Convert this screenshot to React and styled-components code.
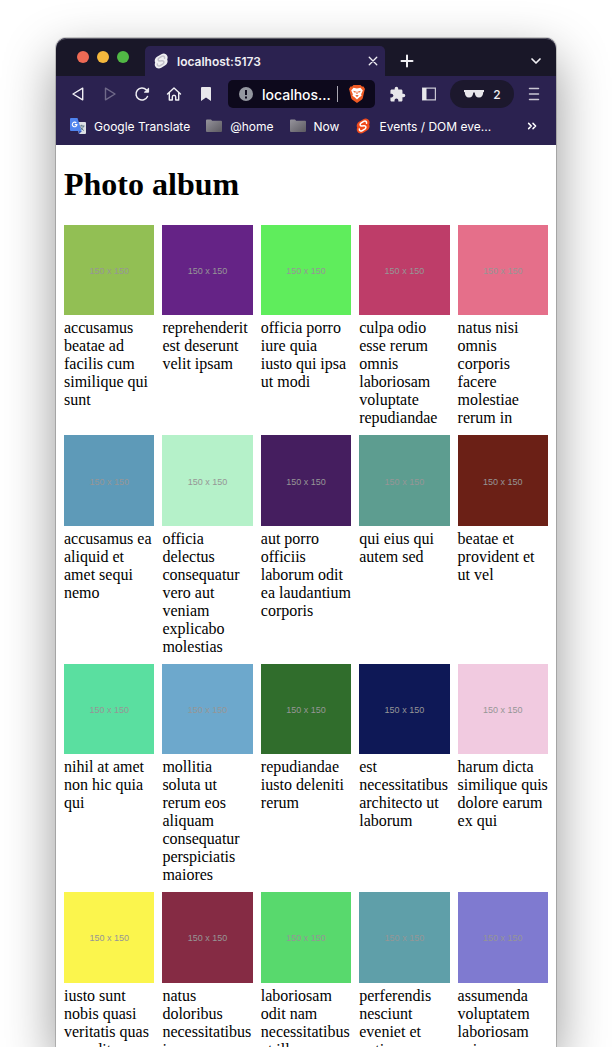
import React from "react";
import styled, { createGlobalStyle } from "styled-components";
import { MdExtension } from "react-icons/md";

const Global = createGlobalStyle`
  *, *::before, *::after { box-sizing: border-box; }
  body { margin: 0; background: #fff; }
  button, input { font: inherit; color: inherit; border: 0; padding: 0; margin: 0; background: none; }
  button { cursor: pointer; }
`;

const Desktop = styled.div`
  display: flex;
  height: 100vh;
  padding: 38px 56px 0;
  overflow: hidden;
`;

const Window = styled.div`
  flex: 1;
  min-width: 0;
  border-radius: 10px 10px 0 0;
  box-shadow: 0 0 0 1px rgba(0, 0, 0, 0.18), 0 20px 52px rgba(0, 0, 0, 0.42);
`;

const Chrome = styled.header`
  overflow: hidden;
  border-radius: 10px 10px 0 0;
  background: #2b2250;
  color: #f0eff4;
  font-family: Inter, "Liberation Sans", sans-serif;
  font-size: 12px;
  font-weight: 500;
`;

const TabStrip = styled.div`
  display: flex;
  align-items: flex-end;
  height: 38px;
  padding-left: 21px;
  border-radius: 10px 10px 0 0;
  background: #191728;
  box-shadow: inset 0 1px 0 #5d5c68;
`;

const Lights = styled.div`
  display: flex;
  align-self: center;
  gap: 8px;
  margin-right: 16px;
`;

const Light = styled.button`
  width: 12px;
  height: 12px;
  border-radius: 50%;
  background: ${(p) => p.$color};
`;

const Tab = styled.div`
  display: flex;
  align-items: center;
  flex: 0 1 240px;
  height: 30px;
  padding: 0 6px 0 8px;
  border-radius: 5px 5px 0 0;
  background: #2b2250;
`;

const TabTitle = styled.span`
  flex: 1;
  margin-left: 8px;
  font-weight: 600;
`;

const IconButton = styled.button`
  display: grid;
  place-items: center;
  flex: none;
  width: ${(p) => p.$w || 32}px;
  height: ${(p) => p.$h || 28}px;
  opacity: ${(p) => (p.disabled ? 0.35 : 1)};
`;

const Spacer = styled.div`
  flex: 1;
`;

const Toolbar = styled.div`
  display: flex;
  align-items: center;
  height: 36px;
  padding: 0 6px;
`;

const Address = styled.div`
  display: flex;
  align-items: center;
  flex: 1;
  min-width: 0;
  height: 28px;
  margin: 0 6px;
  padding: 0 10px;
  border-radius: 5px;
  background: #0d091c;
  font-size: 14px;
`;

const AddressInput = styled.input`
  flex: 1;
  min-width: 0;
  margin: 0 6px 0 8px;
  color: #fff;
`;

const Divider = styled.span`
  width: 1px;
  height: 16px;
  margin-right: 11px;
  background: #a9a7b2;
`;

const PrivateBadge = styled.button`
  display: flex;
  align-items: center;
  justify-content: center;
  gap: 8px;
  width: 64px;
  height: 28px;
  margin: 0 4px 0 5px;
  border-radius: 14px;
  background: #1c182d;

  svg {
    flex: none;
  }
`;

const Bookmarks = styled.nav`
  display: flex;
  align-items: center;
  height: 33px;
  padding: 0 14px 5px;
  gap: 16px;
  font-weight: 400;
  color: #fff;
`;

const Bookmark = styled.a`
  display: flex;
  align-items: center;
  gap: 8px;
  color: inherit;
  text-decoration: none;
  white-space: nowrap;
`;

const Page = styled.main`
  min-height: 100vh;
  padding: 21px 8px 8px;
  background: #fff;
  color: #000;
  font: 16px/18px "Liberation Serif", "Times New Roman", serif;
`;

const Title = styled.h1`
  margin: 0 0 23px;
  font-size: 32px;
  line-height: 36px;
`;

const Album = styled.div`
  display: grid;
  grid-template-columns: repeat(5, minmax(0, 1fr));
  gap: 8px;
`;

const Photo = styled.figure`
  margin: 0;
`;

const Thumb = styled.div`
  display: grid;
  place-items: center;
  aspect-ratio: 1;
  margin-bottom: 4px;
  padding-top: 2px;
  background: ${(p) => p.$color};
  color: #969696;
  font: 9px/12px "Liberation Sans", Arial, sans-serif;
`;

const photos = [
  ["#92bf54", "accusamus beatae ad facilis cum similique qui sunt"],
  ["#652386", "reprehenderit est deserunt velit ipsam"],
  ["#5fed5c", "officia porro iure quia iusto qui ipsa ut modi"],
  ["#be3d69", "culpa odio esse rerum omnis laboriosam voluptate repudiandae"],
  ["#e56f8a", "natus nisi omnis corporis facere molestiae rerum in"],
  ["#5e9ab8", "accusamus ea aliquid et amet sequi nemo"],
  ["#b5f1c9", "officia delectus consequatur vero aut veniam explicabo molestias"],
  ["#451e5f", "aut porro officiis laborum odit ea laudantium corporis"],
  ["#5d9d90", "qui eius qui autem sed"],
  ["#6b2016", "beatae et provident et ut vel"],
  ["#5adfa0", "nihil at amet non hic quia qui"],
  ["#6da8cc", "mollitia soluta ut rerum eos aliquam consequatur perspiciatis maiores"],
  ["#306d2c", "repudiandae iusto deleniti rerum"],
  ["#0e1856", "est necessitatibus architecto ut laborum"],
  ["#f1cae0", "harum dicta similique quis dolore earum ex qui"],
  ["#fbf54d", "iusto sunt nobis quasi veritatis quas expedita voluptatum deserunt"],
  ["#852b44", "natus doloribus necessitatibus ipsa"],
  ["#58d96d", "laboriosam odit nam necessitatibus et illum dolores reiciendis"],
  ["#5f9fa9", "perferendis nesciunt eveniet et optio a"],
  ["#7f7ad0", "assumenda voluptatem laboriosam enim consequatur veniam placeat reiciendis error"],
];

function Line({ size = 16, d, width = 1.5, ...rest }) {
  return (
    <svg width={size} height={size} viewBox="0 0 16 16" fill="none" stroke="currentColor" strokeWidth={width} strokeLinecap="round" strokeLinejoin="round" {...rest}>
      <path d={d} />
    </svg>
  );
}

function SvelteIcon({ fill, mark }) {
  return (
    <svg width="16" height="16" viewBox="0 0 16 16">
      <path d="M8.300 1.200C10.800-.4 13.400.7 14.300 2.900c.5 1.300.4 2.400-.1 3.500.5 1.100.5 2.300.1 3.300-.4 1.200-1.100 1.900-2 2.500l-4 2.600c-2.500 1.500-5 .6-6.100-1.500-.6-1.300-.6-2.500 0-3.700-.6-1.100-.6-2.300-.2-3.300.4-1.100 1.100-1.900 2-2.500z" fill={fill} />
      <path d="M11.600 5.200c.2-2-1.500-2.600-2.900-1.800L5.900 5.200C4.500 6.200 5 8.300 7 8.100l2-.3c2-.2 2.600 1.900 1.100 3l-2.800 1.800c-1.400.9-3.200.3-3-1.700" fill="none" stroke={mark} strokeWidth="1.500" strokeLinecap="round" />
    </svg>
  );
}

function Folder() {
  return (
    <svg width="16" height="16" viewBox="0 0 16 16">
      <defs>
        <linearGradient id="folder" x1="0" y1="0" x2="1" y2="1">
          <stop offset="0" stopColor="#96949c" />
          <stop offset="1" stopColor="#5c5a61" />
        </linearGradient>
      </defs>
      <path d="M0 2.500q0-1 1-1h4l1.200 1.300H15q1 0 1 1V13q0 1-1 1H1q-1 0-1-1z" fill="url(#folder)" />
    </svg>
  );
}

function TranslateIcon() {
  return (
    <svg width="16" height="16" viewBox="0 0 16 16">
      <path d="M6 4h9q1 0 1 1v10q0 1-1 1H9z" fill="#dcdfe3" />
      <path d="M9 8h5.500M11.700 6.800V8M13.500 8c-.5 2-2 3.500-3.500 4.500M10.500 9c.7 1.600 2 2.800 3.300 3.500" fill="none" stroke="#5d7886" strokeWidth="1" />
      <path d="M8.500 13H12l-3 3z" fill="#3457bd" />
      <path d="M1 0h6.500L11.500 13H1q-1 0-1-1V1q0-1 1-1z" fill="#4f84ee" />
      <path d="M6.300 4.900A2.300 2.300 0 1 0 6.900 6.600H4.800" fill="none" stroke="#fff" strokeWidth="1.100" />
    </svg>
  );
}

export default function App() {
  return (
    <Desktop>
      <Global />
      <Window>
        <Chrome>
          <TabStrip>
            <Lights>
              <Light $color="#ee6a55" aria-label="Close window" />
              <Light $color="#f5b83d" aria-label="Minimize window" />
              <Light $color="#51b845" aria-label="Zoom window" />
            </Lights>
            <Tab>
              <SvelteIcon fill="#efeff1" mark="#c3c1ca" />
              <TabTitle>localhost:5173</TabTitle>
              <IconButton $w={12} aria-label="Close tab"><Line size={12} d="M3 3l10 10M13 3L3 13" width={1.8} /></IconButton>
            </Tab>
            <IconButton $w={44} $h={30} aria-label="New tab"><Line d="M8 2.500v11M2.500 8h11" width={2} /></IconButton>
            <Spacer />
            <IconButton $w={40} $h={30} aria-label="Search tabs"><Line d="M4 6l4 4 4-4" width={1.7} /></IconButton>
          </TabStrip>
          <Toolbar>
            <IconButton aria-label="Back"><Line d="M12.700 2.200v11.600L3 8z" width={1.4} /></IconButton>
            <IconButton aria-label="Forward" disabled><Line d="M3.500 2.200v11.600L13 8z" width={1.4} /></IconButton>
            <IconButton aria-label="Reload">
              <svg width="16" height="16" viewBox="0 0 16 16">
                <path d="M13.500 10.500A6 6 0 1 1 12.300 3.800" fill="none" stroke="currentColor" strokeWidth="1.500" strokeLinecap="round" />
                <path d="M14.600 2.200v4h-4.200z" fill="currentColor" stroke="currentColor" strokeWidth="1" strokeLinejoin="round" />
              </svg>
            </IconButton>
            <IconButton aria-label="Home"><Line d="M1.500 8L8 2l6.500 6M3.300 6.800V14h3v-3q0-1.800 1.700-1.800t1.700 1.800v3h3V6.800" width={1.400} /></IconButton>
            <IconButton aria-label="Bookmark this page">
              <svg width="16" height="16" viewBox="0 0 16 16"><path d="M4 1h8q1 0 1 1v13l-5-3.500L3 15V2q0-1 1-1z" fill="#e8e7eb" /></svg>
            </IconButton>
            <Address>
              <svg width="16" height="16" viewBox="0 0 16 16"><circle cx="8" cy="8" r="7" fill="#9497a0" /><path d="M7 4h2v5H7zM7 10.500h2v2H7z" fill="#0d091c" /></svg>
              <AddressInput aria-label="Address" defaultValue="localhos..." />
              <Divider />
              <svg width="16" height="18" viewBox="0 0 16 18">
                <path d="M4.500 0h7L13 1.600l1.500-.2L16 4l-.5 1.500L13.800 13q-.3 1-1.200 1.700L8 18l-4.600-3.300Q2.500 14 2.200 13L.5 5.500 0 4l1.500-2.600 1.500.2z" fill="#ee5a24" />
                <path d="M4.500 2.800l3.500.6 3.500-.6L13.800 5.600l-1.700 3.600.5 1.600-2.200 1.400L8 14.500l-2.400-2.300-2.200-1.400.5-1.600L2.200 5.600z" fill="#fff" />
                <path d="M3.900 5.800l3.100.7-.9 1.600zM12.100 5.800L9 6.500l.9 1.600zM6.200 10.500L8 9.900l1.800.6L8 12zM7.600 6.500h.8l.2 2.500H7.400z" fill="#ee5a24" />
              </svg>
            </Address>
            <IconButton aria-label="Extensions"><MdExtension size={17} color="#e8e7eb" /></IconButton>
            <IconButton aria-label="Sidebar">
              <svg width="16" height="16" viewBox="0 0 16 16"><path d="M1.600 2.100h12.800v11.800H1.600z" fill="none" stroke="#c9c7d3" strokeWidth="1.200" /><path d="M1.500 2h4v12h-4z" fill="#e8e7eb" /></svg>
            </IconButton>
            <PrivateBadge aria-label="Private windows: 2">
              <svg width="22" height="10" viewBox="0 0 22 10"><path d="M1 1h20v2h-.7c-.2 3.500-1.400 5.500-4.300 5.500-2.800 0-4-2-4.300-5h-1.400c-.3 3-1.500 5-4.300 5C3.100 8.500 1.900 6.500 1.700 3H1z" fill="#e8e7eb" /></svg>
              2
            </PrivateBadge>
            <IconButton aria-label="Menu"><Line d="M3.500 2.500h9M3.500 8h9M3.500 13.500h9" width={1.500} color="#c9c7d3" /></IconButton>
          </Toolbar>
          <Bookmarks aria-label="Bookmarks">
            <Bookmark href="#translate"><TranslateIcon />Google Translate</Bookmark>
            <Bookmark href="#home"><Folder />@home</Bookmark>
            <Bookmark href="#now"><Folder />Now</Bookmark>
            <Bookmark href="#events"><SvelteIcon fill="#f04b1d" mark="#fff" />Events / DOM eve...</Bookmark>
            <Spacer />
            <IconButton $w={18} $h={20} aria-label="More bookmarks"><Line size={14} d="M3 5l3 3-3 3M8 5l3 3-3 3" width={1.700} /></IconButton>
          </Bookmarks>
        </Chrome>
        <Page>
          <Title>Photo album</Title>
          <Album>
            {photos.map(([color, title]) => (
              <Photo key={title}>
                <Thumb $color={color}>150 x 150</Thumb>
                <figcaption>{title}</figcaption>
              </Photo>
            ))}
          </Album>
        </Page>
      </Window>
    </Desktop>
  );
}
